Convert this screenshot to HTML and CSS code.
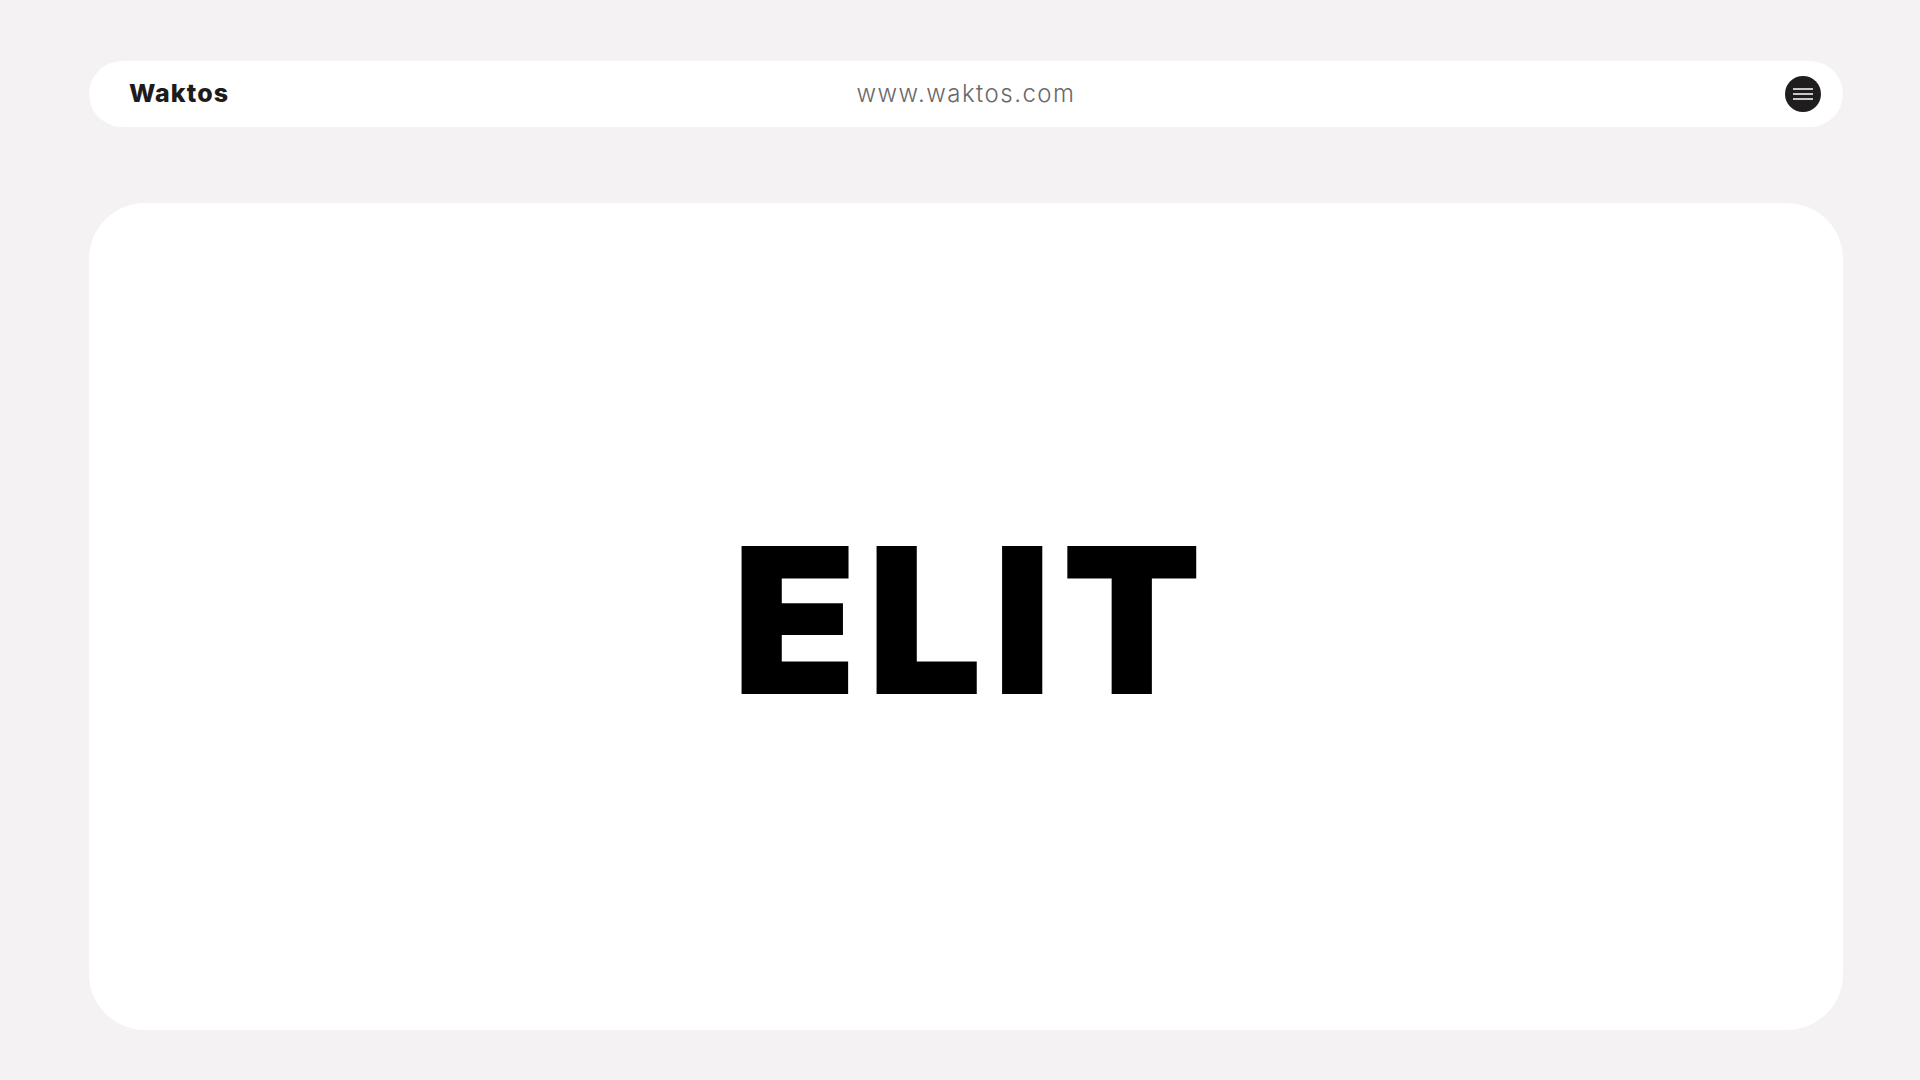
FILE: index.html
```html
<!DOCTYPE html>
<html lang="en">
<head>
<meta charset="utf-8">
<title>Waktos</title>
<link rel="stylesheet" href="styles.css">
</head>
<body>
<div class="page">
  <header class="topbar">
    <div class="logo">Waktos</div>
    <div class="url">www.waktos.com</div>
    <button class="menu" aria-label="Menu">
      <svg width="20" height="12" viewBox="0 0 20 12"><path d="M0 1h20M0 6h20M0 11h20" stroke="#fff" stroke-width="1.4"/></svg>
    </button>
  </header>
  <main class="card">
    <h1 class="title">ELIT</h1>
  </main>
</div>
</body>
</html>
```
FILE: styles.css
```css
html, body {
  margin: 0;
  padding: 0;
  background: #f4f2f3;
}
body {
  font-family: "Inter", "Liberation Sans", sans-serif;
}
.page {
  width: 1920px;
  height: 1080px;
  box-sizing: border-box;
  padding: 61px 77px 50px 89px;
  display: flex;
  flex-direction: column;
  gap: 76px;
}
.topbar {
  height: 66px;
  background: #fff;
  border-radius: 33px;
  display: grid;
  grid-template-columns: 1fr auto 1fr;
  align-items: center;
  padding: 0 22px;
}
.logo {
  margin-left: 18px;
  margin-bottom: 2px;
  font-weight: 800;
  font-size: 25px;
  color: #1d1b1c;
  letter-spacing: 1.1px;
}
.url {
  margin-bottom: 2px;
  font-size: 24px;
  font-weight: 300;
  color: #6a6869;
  letter-spacing: 1.5px;
}
.menu {
  justify-self: end;
  width: 36px;
  height: 36px;
  border-radius: 50%;
  border: none;
  padding: 0;
  background: #1f1d1e;
  display: flex;
  align-items: center;
  justify-content: center;
}
.card {
  flex: 1;
  background: #fff;
  border-radius: 56px;
  display: flex;
  align-items: center;
  justify-content: center;
}
.title {
  margin: 6px 0 0;
  font-size: 204px;
  font-weight: 900;
  color: #000;
  letter-spacing: 10px;
  line-height: 1;
  padding-left: 12px;
}
```
